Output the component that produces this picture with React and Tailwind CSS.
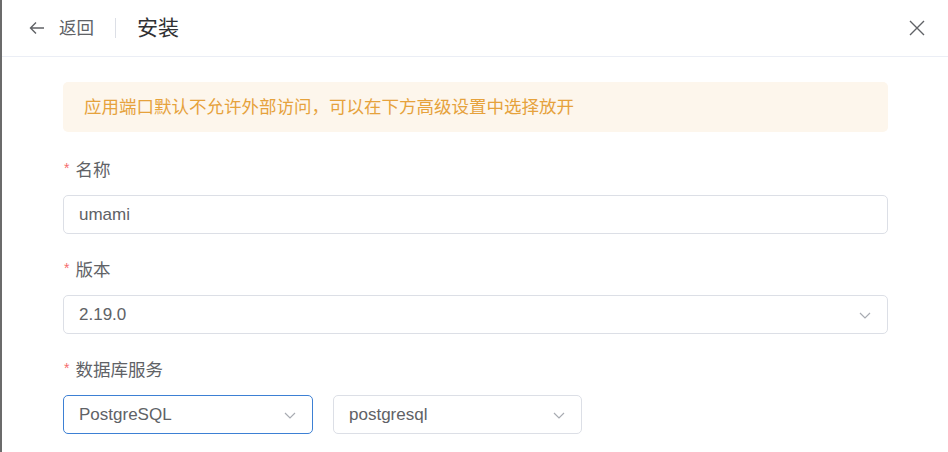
import React from 'react'

const Chevron = () => (
    <svg width="14" height="14" viewBox="0 0 14 14" fill="none" stroke="#a8abb2" strokeWidth="1.2">
        <path d="M2 5l5 5 5-5" />
    </svg>
)

const Label = ({ children }) => (
    <div className="flex items-center h-[24px] text-[17.5px] text-[#606266]">
        <span className="text-[14px] text-[#f56c6c] ml-[1px] mr-[6px] -mt-[4px]">*</span>
        {children}
    </div>
)

const Select = ({ value, focused, className }) => (
    <div
        className={`flex items-center justify-between h-[39px] px-[15px] rounded-[5px] bg-white border ${
            focused ? 'border-[#3d80d4]' : 'border-[#dcdfe6]'
        } ${className}`}
    >
        <span className="text-[17px] text-[#606266]">{value}</span>
        <Chevron />
    </div>
)

const App = () => {
    return (
        <div
            className="w-[948px] h-[452px] bg-white border-l-2 border-[#6b6b6b] overflow-hidden"
            style={{ fontFamily: '"Liberation Sans", "Noto Sans CJK SC", sans-serif' }}
        >
            <div className="h-[57px] flex items-center border-b border-[#ebeef5] pl-[26px] pr-[22px]">
                <svg width="18" height="18" viewBox="0 0 18 18" fill="none" stroke="#606266" strokeWidth="1.4">
                    <path d="M16 9H2.5M8 3.5L2.5 9 8 14.5" />
                </svg>
                <span className="ml-[13px] text-[17.5px] text-[#606266]">返回</span>
                <div className="mx-[21px] w-px h-[20px] bg-[#dcdfe6]" />
                <span className="text-[21px] text-[#303133]">安装</span>
                <div className="flex-1" />
                <svg width="18" height="18" viewBox="0 0 18 18" fill="none" stroke="#606266" strokeWidth="1.4">
                    <path d="M2 2l14 14M16 2L2 16" />
                </svg>
            </div>

            <div className="pl-[61px] pr-[60px] pt-[25px]">
                <div className="h-[50px] flex items-center px-[21px] rounded-[5px] bg-[#fdf6ec] text-[#e6a23c] text-[17.5px]">
                    应用端口默认不允许外部访问，可以在下方高级设置中选择放开
                </div>

                <div className="mt-[26px]">
                    <Label>名称</Label>
                    <div className="mt-[13px] flex items-center h-[39px] px-[15px] rounded-[5px] border border-[#dcdfe6] text-[17px] text-[#606266]">
                        umami
                    </div>
                </div>

                <div className="mt-[24px]">
                    <Label>版本</Label>
                    <Select value="2.19.0" className="mt-[13px]" />
                </div>

                <div className="mt-[24px]">
                    <Label>数据库服务</Label>
                    <div className="mt-[13px] flex gap-[20px]">
                        <Select value="PostgreSQL" focused className="w-[250px]" />
                        <Select value="postgresql" className="w-[249px]" />
                    </div>
                </div>
            </div>
        </div>
    )
}

export default App
